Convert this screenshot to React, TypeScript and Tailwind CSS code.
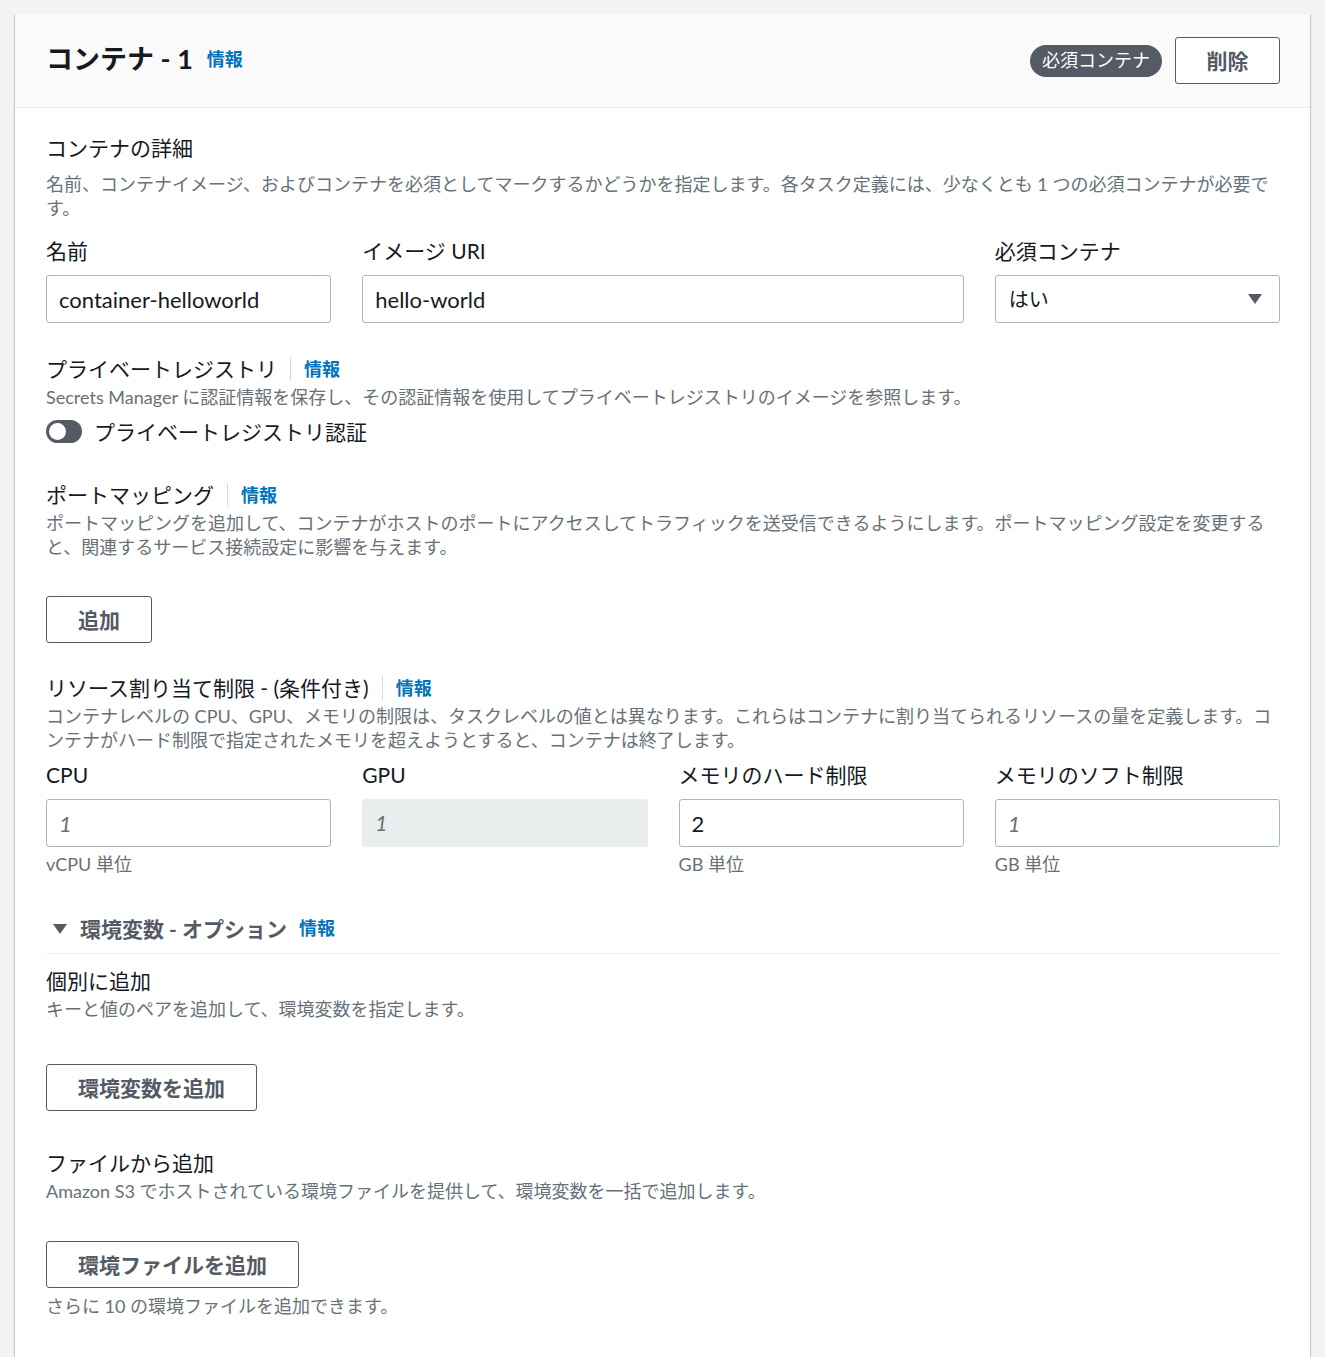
import React from 'react';

const FONT = 'font-["Lato","Noto_Sans_CJK_JP",sans-serif]';

function InfoLink({ divider = false }: { divider?: boolean }) {
  return (
    <span className="inline-flex items-center">
      {divider && <span className="mx-[13px] h-[24px] w-px bg-[#d5dbdb]" />}
      <a className="text-[18px] font-bold text-[#0073bb] leading-[24px] cursor-pointer">情報</a>
    </span>
  );
}

function Heading({ children, info = true }: { children: React.ReactNode; info?: boolean }) {
  return (
    <div className="flex items-center text-[21px] leading-[33px] text-[#16191f]">
      <span>{children}</span>
      {info && <InfoLink divider />}
    </div>
  );
}

function Desc({ children }: { children: React.ReactNode }) {
  return <p className="text-[18px] leading-[24px] text-[#687078]">{children}</p>;
}

function Label({ children }: { children: React.ReactNode }) {
  return <div className="text-[21px] leading-[33px] text-[#16191f] mb-[8px]">{children}</div>;
}

function TextInput({ value, placeholder, disabled }: { value?: string; placeholder?: string; disabled?: boolean }) {
  return (
    <div
      className={
        disabled
          ? 'h-[48px] rounded-[3px] bg-[#eaeded] px-[13px] flex items-center text-[21px] italic text-[#687078]'
          : 'h-[48px] rounded-[3px] border border-[#aab7b8] bg-white px-[12px] flex items-center text-[22px] ' +
            (value ? 'text-[#16191f]' : 'italic text-[#687078] text-[21px]')
      }
    >
      {value ?? placeholder}
    </div>
  );
}

function Button({ children }: { children: React.ReactNode }) {
  return (
    <button className="h-[47px] rounded-[3px] border border-[#545b64] bg-white px-[31px] text-[21px] font-bold text-[#545b64] leading-none">
      {children}
    </button>
  );
}

export default function App() {
  return (
    <div className={`min-h-[1357px] bg-[#f2f3f3] pt-[14px] px-[15px] ${FONT}`}>
      <div className="w-[1295px] bg-white shadow-[0_1px_1px_0_rgba(0,28,36,0.3),1px_1px_1px_0_rgba(0,28,36,0.15),-1px_1px_1px_0_rgba(0,28,36,0.15)] min-h-[1343px]">
        {/* Header */}
        <div className="h-[94px] bg-[#fafafa] border-b border-[#eaeded] flex items-center justify-between pl-[31px] pr-[30px]">
          <div className="flex items-center gap-[14px] -mt-[3px]">
            <h2 className="text-[27px] font-bold text-[#16191f] leading-[36px]">コンテナ - 1</h2>
            <InfoLink />
          </div>
          <div className="flex items-center gap-[13px]">
            <span className="h-[32px] rounded-full bg-[#545b64] px-[12px] flex items-center text-[18px] text-white">必須コンテナ</span>
            <button className="h-[47px] w-[105px] rounded-[3px] border border-[#545b64] bg-white text-[21px] font-bold text-[#545b64]">削除</button>
          </div>
        </div>

        {/* Body */}
        <div className="pl-[31px] pr-[30px] pt-[23px] pb-[40px]">
          {/* Container details */}
          <Heading info={false}>コンテナの詳細</Heading>
          <div className="mt-[8px]">
            <Desc>名前、コンテナイメージ、およびコンテナを必須としてマークするかどうかを指定します。各タスク定義には、少なくとも 1 つの必須コンテナが必要です。</Desc>
          </div>
          <div className="grid grid-cols-4 gap-x-[31px] mt-[14px]">
            <div>
              <Label>名前</Label>
              <TextInput value="container-helloworld" />
            </div>
            <div className="col-span-2">
              <Label>イメージ URI</Label>
              <TextInput value="hello-world" />
            </div>
            <div>
              <Label>必須コンテナ</Label>
              <div className="h-[48px] rounded-[3px] border border-[#aab7b8] bg-white pl-[13px] pr-[16px] flex items-center justify-between text-[20px] text-[#16191f]">
                <span>はい</span>
                <svg width="16" height="12" viewBox="0 0 16 12">
                  <path d="M1 1h14L8 11z" fill="#545b64" />
                </svg>
              </div>
            </div>
          </div>

          {/* Private registry */}
          <div className="mt-[29px]">
            <Heading>プライベートレジストリ</Heading>
            <Desc>Secrets Manager に認証情報を保存し、その認証情報を使用してプライベートレジストリのイメージを参照します。</Desc>
            <div className="mt-[6px] flex items-center gap-[12px]">
              <span className="relative h-[23px] w-[36px] rounded-full bg-[#545b64]">
                <span className="absolute left-[3px] top-[3px] h-[17px] w-[17px] rounded-full bg-white" />
              </span>
              <span className="text-[21px] leading-[33px] text-[#16191f]">プライベートレジストリ認証</span>
            </div>
          </div>

          {/* Port mapping */}
          <div className="mt-[30px]">
            <Heading>ポートマッピング</Heading>
            <Desc>ポートマッピングを追加して、コンテナがホストのポートにアクセスしてトラフィックを送受信できるようにします。ポートマッピング設定を変更すると、関連するサービス接続設定に影響を与えます。</Desc>
            <div className="mt-[37px]">
              <Button>追加</Button>
            </div>
          </div>

          {/* Resource limits */}
          <div className="mt-[28px]">
            <Heading>リソース割り当て制限 - (条件付き)</Heading>
            <Desc>コンテナレベルの CPU、GPU、メモリの制限は、タスクレベルの値とは異なります。これらはコンテナに割り当てられるリソースの量を定義します。コンテナがハード制限で指定されたメモリを超えようとすると、コンテナは終了します。</Desc>
            <div className="grid grid-cols-4 gap-x-[31px] mt-[6px]">
              <div>
                <Label>CPU</Label>
                <TextInput placeholder="1" />
                <div className="mt-[5px]"><Desc>vCPU 単位</Desc></div>
              </div>
              <div>
                <Label>GPU</Label>
                <TextInput placeholder="1" disabled />
              </div>
              <div>
                <Label>メモリのハード制限</Label>
                <TextInput value="2" />
                <div className="mt-[5px]"><Desc>GB 単位</Desc></div>
              </div>
              <div>
                <Label>メモリのソフト制限</Label>
                <TextInput placeholder="1" />
                <div className="mt-[5px]"><Desc>GB 単位</Desc></div>
              </div>
            </div>
          </div>

          {/* Environment variables */}
          <div className="mt-[36px]">
            <div className="border-b border-[#eaeded] pb-[8px] flex items-center pl-[6px]">
              <svg width="16" height="12" viewBox="0 0 16 12" className="mr-[12px]">
                <path d="M1 1h14L8 11z" fill="#545b64" />
              </svg>
              <span className="text-[21px] font-bold leading-[33px] text-[#545b64]">環境変数 - オプション</span>
              <span className="ml-[12px]"><InfoLink /></span>
            </div>

            <div className="mt-[10px]">
              <Heading info={false}>個別に追加</Heading>
              <Desc>キーと値のペアを追加して、環境変数を指定します。</Desc>
              <div className="mt-[43px]">
                <Button>環境変数を追加</Button>
              </div>
            </div>

            <div className="mt-[35px]">
              <Heading info={false}>ファイルから追加</Heading>
              <Desc>Amazon S3 でホストされている環境ファイルを提供して、環境変数を一括で追加します。</Desc>
              <div className="mt-[38px]">
                <Button>環境ファイルを追加</Button>
              </div>
              <div className="mt-[6px]">
                <Desc>さらに 10 の環境ファイルを追加できます。</Desc>
              </div>
            </div>
          </div>
        </div>
      </div>
    </div>
  );
}
